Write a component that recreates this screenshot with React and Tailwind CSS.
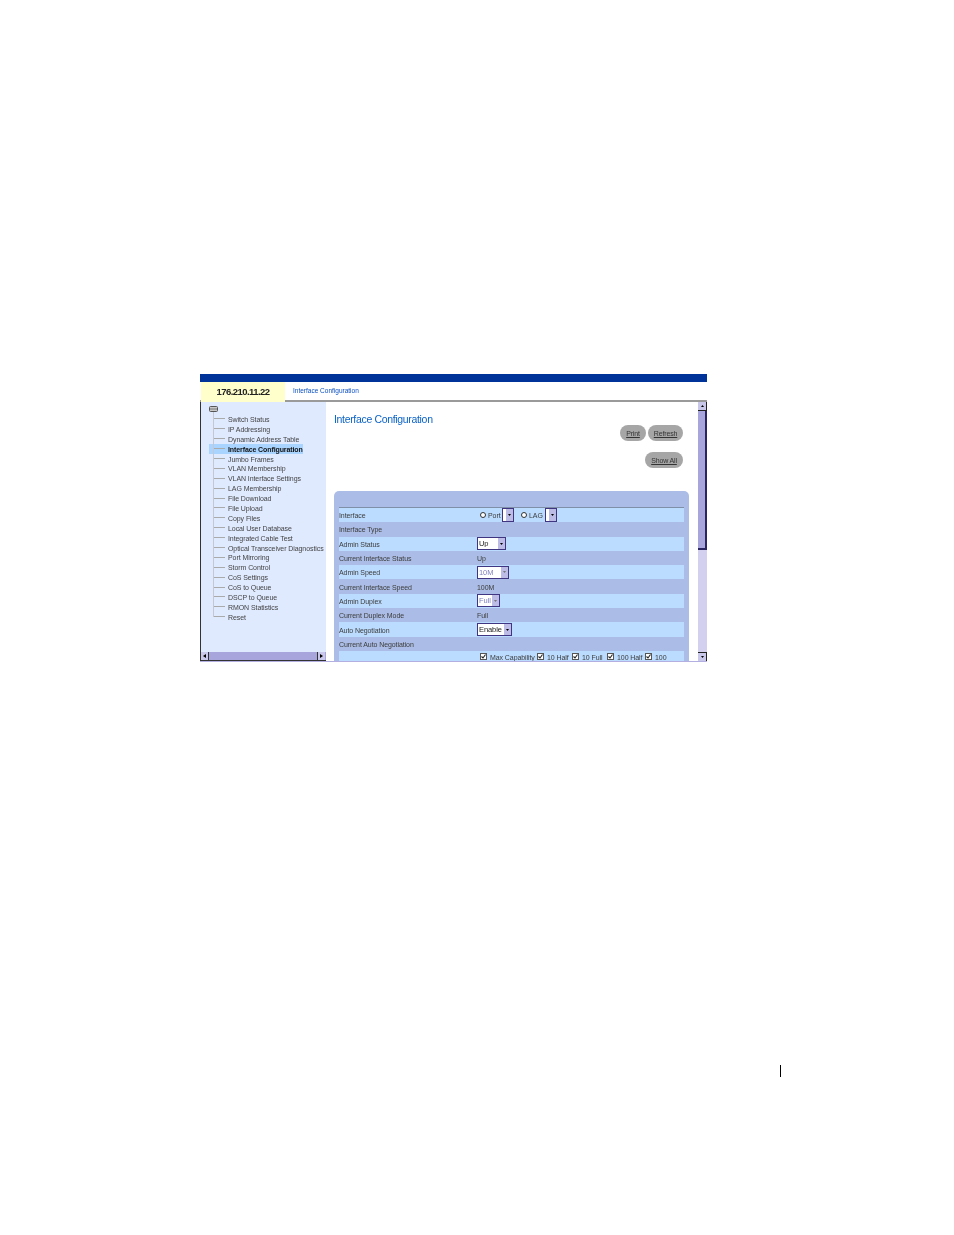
const nav = ["Switch Status","IP Addressing","Dynamic Address Table","Interface Configuration","Jumbo Frames","VLAN Membership","VLAN Interface Settings","LAG Membership","File Download","File Upload","Copy Files","Local User Database","Integrated Cable Test","Optical Transceiver Diagnostics","Port Mirroring","Storm Control","CoS Settings","CoS to Queue","DSCP to Queue","RMON Statistics","Reset"];

function Sel({ text, w, disabled, tall }) {
  return (
    <span className={`inline-flex items-center shrink-0 border border-[#3f3580] bg-white ${tall ? "h-[14px]" : "h-[13px]"} ${disabled ? "text-[#8080c0]" : "text-[#222]"}`} style={{ width: w }}>
      <span className="flex-1 pl-[1px] text-[7.5px] leading-none overflow-hidden">{text}</span>
      <span className="w-[7px] h-full flex items-center justify-center bg-[#bdbce6]">
        <svg width="3" height="2" viewBox="0 0 3 2"><path d="M0 0h3L1.500 2z" fill={disabled ? "#777" : "#000"} /></svg>
      </span>
    </span>
  );
}

function Radio() {
  return <span className="inline-block shrink-0 w-[6px] h-[6px] rounded-full bg-white border border-[#333]" />;
}

function Check() {
  return (
    <span className="inline-flex shrink-0 w-[7px] h-[7px] items-center justify-center bg-white border border-[#555]">
      <svg width="5" height="5" viewBox="0 0 5 5"><path d="M0.500 2.500L2 4L4.500 0.500" stroke="#222" strokeWidth="1.100" fill="none" /></svg>
    </span>
  );
}

function Row({ label, on, children }) {
  return (
    <div className={`flex items-center h-[14.3px] shrink-0 ${on ? "bg-[#bbdcff]" : ""}`}>
      <div className="w-[138px] pt-[1px] text-[#3c3c3c]">{label}</div>
      <div className="flex items-center flex-1 text-[#3c3c3c]">{children}</div>
    </div>
  );
}

function Val({ children }) {
  return <span className="pt-[1px]">{children}</span>;
}

function Btn({ w, children }) {
  return <span className={`${w} h-[16px] rounded-full bg-[#a6a6a6] flex items-center justify-center text-[7px] tracking-[-0.15px] underline text-[#333]`}>{children}</span>;
}

function ScrollBtn({ children, className = "" }) {
  return <span className={`w-[8px] h-[8px] shrink-0 bg-[#c9c8ea] flex items-center justify-center ${className}`}>{children}</span>;
}

export default function App() {
  return (
    <div className="relative w-[954px] h-[1235px] bg-white pt-[374px] pl-[200px] overflow-hidden font-['Liberation_Sans',Arial,sans-serif]">
      <div className="w-[507px] h-[288px] flex flex-col overflow-hidden blur-[0.3px] text-[7px] leading-none tracking-[-0.08px] border-b border-[#b3afe0]">
        <div className="h-[8px] bg-[#003399] shrink-0" />
        <div className="h-[20px] flex shrink-0 border-b-2 border-[#9a9a9a] bg-white">
          <div className="w-[84px] ml-[1px] h-[20px] bg-[#ffffcc] flex items-center justify-center text-[9.5px] font-bold text-[#222] tracking-[-0.55px]">176.210.11.22</div>
          <div className="pl-[8px] flex items-center text-[#0a4fc0] text-[6.500px] tracking-normal">Interface Configuration</div>
        </div>
        <div className="flex flex-1 min-h-0">
          <div className="w-[126px] shrink-0 bg-[#dfeaff] border-l border-[#333] flex flex-col">
            <div className="flex-1 pt-[4px] pl-[8px]">
              <svg width="10" height="7" viewBox="0 0 10 7" className="block">
                <rect x="0.500" y="0.500" width="8" height="5" rx="1" fill="#c9c9c9" stroke="#555" />
                <path d="M1 3h7" stroke="#777" />
              </svg>
              <div className="relative mt-[1px]">
                {nav.map((n, i) => (
                  <div key={n} className={`flex items-center h-[9.9px] ${i === 3 ? "bg-[#a9d4ff] font-bold text-[#111] w-[94px] tracking-[-0.1px]" : "text-[#444]"}`}>
                    <span className="ml-[4px] w-[12px] shrink-0 border-t border-[#aaa]" />
                    <span className="ml-[3px] mt-[1px] shrink-0 whitespace-nowrap">{n}</span>
                  </div>
                ))}
                <div className="absolute left-[4px] top-[-2px] bottom-[5px] border-l border-[#c4c8d4]" />
              </div>
            </div>
            <div className="h-[9px] flex items-center bg-[#a8a5dc] border-b border-[#333]">
              <ScrollBtn className="border-r border-[#333]"><svg width="3" height="4" viewBox="0 0 3 4"><path d="M3 0v4L0 2z" fill="#000" /></svg></ScrollBtn>
              <span className="flex-1" />
              <ScrollBtn className="border-l border-[#333] mr-[1px]"><svg width="3" height="4" viewBox="0 0 3 4"><path d="M0 0v4L3 2z" fill="#000" /></svg></ScrollBtn>
            </div>
          </div>
          <div className="flex-1 min-w-0 bg-white pl-[8px] relative overflow-hidden">
            <div className="text-[10.500px] h-[23px] text-[#0a62c8] pt-[12px] tracking-[-0.33px]">Interface Configuration</div>
            <div className="flex flex-col items-end pr-[24px]">
              <div className="flex gap-[2px]">
                <Btn w="w-[26px]">Print</Btn>
                <Btn w="w-[35px]">Refresh</Btn>
              </div>
              <div className="mt-[11px]"><Btn w="w-[38px]">Show All</Btn></div>
            </div>
            <div className="mt-[23px] w-[355px] bg-[#abbde6] rounded-t-[5px] pt-[16px] px-[5px] h-[200px]">
              <div className="flex flex-col border-t border-[#7f8fa8]">
                <Row on label="Interface">
                  <span className="w-[3px]" /><Radio /><span className="ml-[2px] mr-[2px] pt-[1px] w-[12px]">Port</span><Sel text="" w="12px" tall />
                  <span className="w-[7px]" /><Radio /><span className="ml-[2px] mr-[3px] pt-[1px] w-[13px]">LAG</span><Sel text="" w="12px" tall />
                </Row>
                <Row label="Interface Type" />
                <Row on label="Admin Status"><Sel text="Up" w="29px" /></Row>
                <Row label="Current Interface Status"><Val>Up</Val></Row>
                <Row on label="Admin Speed"><Sel text="10M" w="32px" disabled /></Row>
                <Row label="Current Interface Speed"><Val>100M</Val></Row>
                <Row on label="Admin Duplex"><Sel text="Full" w="23px" disabled /></Row>
                <Row label="Current Duplex Mode"><Val>Full</Val></Row>
                <Row on label="Auto Negotiation"><Sel text="Enable" w="35px" /></Row>
                <Row label="Current Auto Negotiation" />
                <div className="flex h-[26px] bg-[#bbdcff] text-[#3c3c3c]">
                  <div className="w-[138px] self-center">Admin Advertisement</div>
                  <div className="flex items-center h-[12px] ml-[3px] whitespace-nowrap">
                    <Check /><span className="ml-[3px] pt-[1px] w-[47px]">Max Capability</span>
                    <Check /><span className="ml-[3px] pt-[1px] w-[25px]">10 Half</span>
                    <Check /><span className="ml-[3px] pt-[1px] w-[25px]">10 Full</span>
                    <Check /><span className="ml-[3px] pt-[1px] w-[28px]">100 Half</span>
                    <Check /><span className="ml-[3px] pt-[1px]">100</span>
                  </div>
                </div>
              </div>
            </div>
            <div className="absolute right-0 top-0 bottom-0 w-[9px] bg-[#d3d0ef] flex flex-col justify-between">
              <div>
                <ScrollBtn className="w-[9px] h-[9px] border-b border-r border-[#222]"><svg width="3" height="2" viewBox="0 0 3 2"><path d="M0 2h3L1.500 0z" fill="#000" /></svg></ScrollBtn>
                <div className="h-[139px] bg-[#a8a5dc] border-b-2 border-r-2 border-[#2a2460]" />
              </div>
              <ScrollBtn className="w-[9px] h-[9px] border-t border-r border-[#222]"><svg width="3" height="2" viewBox="0 0 3 2"><path d="M0 0h3L1.500 2z" fill="#000" /></svg></ScrollBtn>
            </div>
          </div>
        </div>
      </div>
      <div className="absolute left-[780px] top-[1065px] w-px h-[12px] bg-black" />
    </div>
  );
}
